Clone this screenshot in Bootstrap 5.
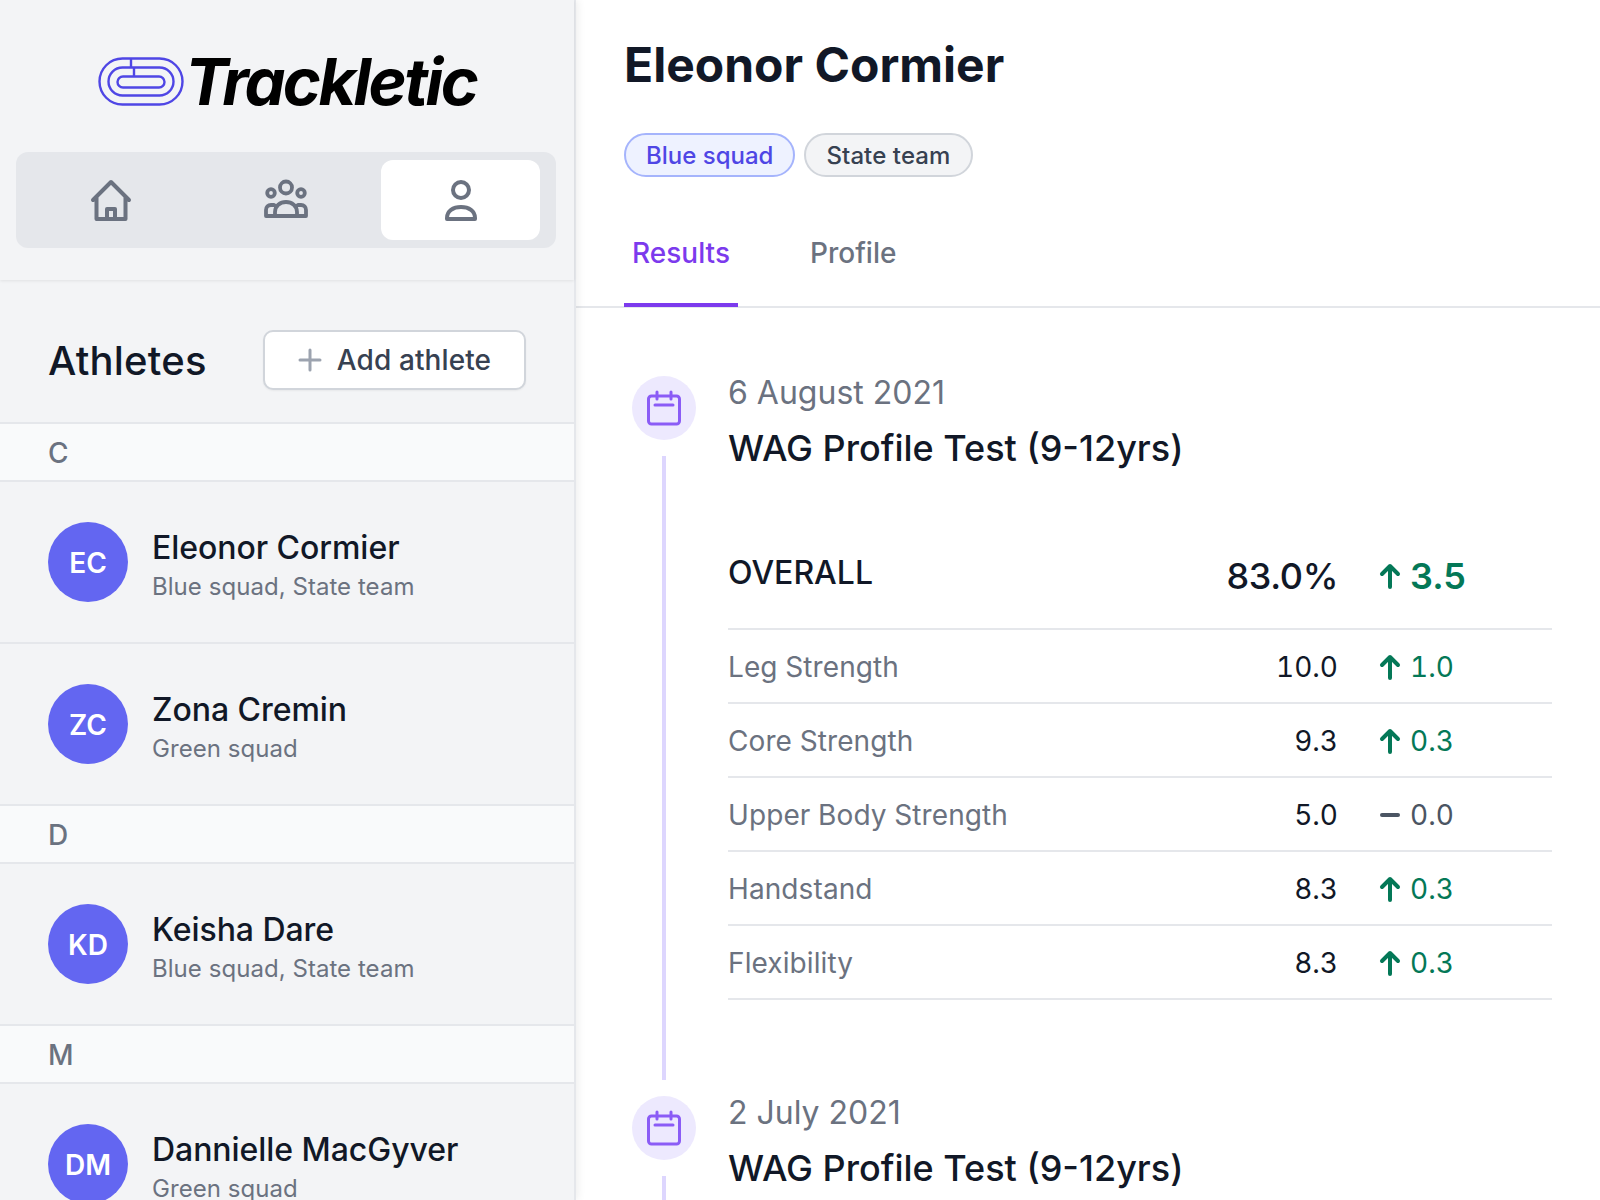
<!DOCTYPE html>
<html lang="en">
<head>
  <meta charset="UTF-8" />
  <title>Trackletic</title>
  <link href="https://cdn.jsdelivr.net/npm/bootstrap@5.3.2/dist/css/bootstrap.min.css" rel="stylesheet" />
  <style>
    html, body { height: 100%; }
    body { font-family: Inter, "Liberation Sans", sans-serif; color: #111827; overflow: hidden; background: #fff; }
    .app-shell { height: 1200px; }
    .side-panel { width: 576px; flex: none; background: #f3f4f6; border-right: 2px solid #e5e7eb; box-shadow: 2px 0 8px rgba(0,0,0,.07); z-index: 2; }
    .side-top { height: 280px; padding: 54px 18px 0 16px; box-shadow: 0 1px 3px rgba(0,0,0,.08); }
    .brand-row { height: 98px; padding-left: 82px; }
    .brand-mark { margin: 3px 1px 0 0; flex: none; }
    .brand-name { font-size: 65px; font-weight: 700; font-style: italic; letter-spacing: -2.6px; line-height: 1; color: #000; margin-top: -5px; }
    .switcher { height: 96px; background: #e5e7eb; border-radius: 12px; padding: 8px 8px 8px 7px; }
    .switch-cell { width: 175px; flex: none; display: flex; align-items: center; justify-content: center; border-radius: 12px; color: #6b7280; }
    .switch-cell.is-on { width: 159px; background: #fff; margin: 0 8px; }
    .athletes-head { height: 142px; padding: 18px 48px 0 48px; }
    .athletes-title { font-size: 40px; font-weight: 500; letter-spacing: .2px; margin: 0; padding-top: 2px; }
    .add-btn { width: 263px; height: 60px; font-size: 28px; font-weight: 500; letter-spacing: .1px; color: #374151; background: #fff; border: 2px solid #d1d5db; border-radius: 10px; box-shadow: 0 1px 2px rgba(0,0,0,.05); gap: 15px; }
    .letter-row { height: 60px; padding: 2px 0 0 48px; background: #f9fafb; border-top: 2px solid #e5e7eb; border-bottom: 2px solid #e5e7eb; color: #6b7280; font-size: 28px; font-weight: 500; display: flex; align-items: center; }
    .person-row { height: 160px; padding-left: 48px; gap: 24px; display: flex; align-items: center; }
    .person-row + .person-row { height: 162px; border-top: 2px solid #e5e7eb; }
    .avatar-dot { width: 80px; height: 80px; border-radius: 50%; background: #6366f1; color: #fff; font-size: 28px; font-weight: 600; flex: none; display: flex; align-items: center; justify-content: center; padding-top: 1px; }
    .person-text { padding-top: 8px; }
    .person-name { font-size: 32px; font-weight: 500; line-height: 40px; letter-spacing: -.05px; }
    .person-sub { font-size: 24px; color: #6b7280; line-height: 36px; margin-top: 1px; letter-spacing: .05px; }
    .main-panel { flex: 1 1 0; min-width: 0; }
    .main-head { padding: 32px 0 0 48px; border-bottom: 2px solid #e5e7eb; height: 308px; }
    .athlete-title { font-size: 48px; font-weight: 700; line-height: 66px; margin: 0 0 35px; }
    .tag-pill { height: 44px; padding: 2px 20px 0; border-radius: 22px; font-size: 24px; font-weight: 500; display: inline-flex; align-items: center; border: 2px solid #d1d5db; background: #f3f4f6; color: #374151; }
    .tag-pill.is-blue { background: #eef2ff; border-color: #a5b4fc; color: #4f46e5; margin-right: 9px; }
    .tag-pill.is-plain { padding-right: 21px; letter-spacing: .1px; }
    .tab-row { margin-top: 55px; }
    .tab-link { font-size: 28px; font-weight: 500; color: #6b7280; padding: 0 8px 29px; margin-right: 64px; line-height: 42px; }
    .tab-link.is-on { color: #7c3aed; border-bottom: 4px solid #7c3aed; }
    .results-wrap { padding: 68px 48px 0 48px; }
    .timeline-item { gap: 24px; }
    .rail { width: 80px; flex: none; padding-left: 8px; gap: 16px; }
    .rail-dot { width: 64px; height: 64px; border-radius: 50%; background: #ede9fe; color: #8b5cf6; display: flex; align-items: center; justify-content: center; flex: none; }
    .rail-line { width: 4px; background: #ddd6fe; margin-left: 30px; height: 624px; }
    .rail-line.is-short { height: 60px; }
    .test-date { font-size: 32px; color: #6b7280; line-height: 36px; margin-top: -1px; }
    .test-name { font-size: 36px; font-weight: 500; line-height: 44px; margin: 15px 0 0; }
    .score-list { margin-top: 59px; width: 824px; }
    .score-row { height: 74px; border-bottom: 2px solid #e5e7eb; font-size: 28px; display: flex; align-items: center; color: #6b7280; padding-top: 2px; font-variant-numeric: tabular-nums; }
    .score-row.is-total { height: 101px; color: #111827; padding-top: 0; font-variant-numeric: normal; }
    .score-label { flex: 1 1 0; letter-spacing: .1px; }
    .is-total .score-label { font-size: 32px; font-weight: 500; margin-top: -12px; letter-spacing: 0; }
    .score-value { color: #111827; width: 141px; text-align: right; }
    .is-total .score-value { font-size: 36px; font-weight: 500; letter-spacing: -.4px; }
    .score-delta { width: 214px; padding-left: 41px; display: flex; align-items: center; gap: 9px; color: #047857; }
    .is-total .score-delta { font-size: 36px; font-weight: 600; }
    .is-total .score-value, .is-total .score-delta { margin-top: -6px; }
    .score-delta.is-flat { color: #4b5563; }
    .next-item { margin-top: 16px; }
  </style>
</head>
<body>
  <div class="app-shell d-flex">
    <aside class="side-panel">
      <div class="side-top">
        <div class="brand-row d-flex align-items-start">
          <svg class="brand-mark" width="86" height="50" viewBox="97 56 86 50" fill="none" stroke="#4f46e5" stroke-width="2.4">
            <rect x="98.500" y="57.500" width="83" height="46" rx="23"/>
            <rect x="107.500" y="66.500" width="65" height="28" rx="14"/>
            <rect x="116.500" y="75.500" width="47" height="11" rx="5.500"/>
            <path d="M130 57.500v9M133 66.500v9"/>
          </svg>
          <span class="brand-name">Trackletic</span>
        </div>
        <div class="switcher d-flex">
          <div class="switch-cell">
            <svg width="48" height="48" viewBox="0 0 48 48" fill="none" stroke="currentColor" stroke-width="4" stroke-linecap="round" stroke-linejoin="round"><path d="M6 24 24 6l18 18M9.500 21v22h29V21M20 43V33h8v10"/></svg>
          </div>
          <div class="switch-cell">
            <svg width="48" height="48" viewBox="0 0 48 48" fill="none" stroke="currentColor" stroke-width="3.800" stroke-linecap="round" stroke-linejoin="round"><circle cx="24" cy="11.500" r="6"/><circle cx="9" cy="17" r="3.800"/><circle cx="39" cy="17" r="3.800"/><path d="M4 40v-6c0-3 2-5 5-5h3M44 40v-6c0-3-2-5-5-5h-3M13 40v-4c0-6 5-10 11-10s11 4 11 10v4M4 40h40"/></svg>
          </div>
          <div class="switch-cell is-on">
            <svg width="48" height="48" viewBox="0 0 48 48" fill="none" stroke="currentColor" stroke-width="4" stroke-linecap="round" stroke-linejoin="round"><circle cx="24" cy="14" r="8"/><path d="M10 43v-1c0-7 6-11 14-11s14 4 14 11v1z"/></svg>
          </div>
        </div>
      </div>

      <div class="athletes-head d-flex justify-content-between align-items-center">
        <h2 class="athletes-title">Athletes</h2>
        <button type="button" class="btn add-btn d-flex align-items-center justify-content-center p-0">
          <svg width="24" height="24" viewBox="0 0 24 24" fill="none" stroke="#9ca3af" stroke-width="3" stroke-linecap="round"><path d="M12 2v20M2 12h20"/></svg>
          Add athlete
        </button>
      </div>

      <div class="letter-row">C</div>
      <div class="person-row">
        <div class="avatar-dot">EC</div>
        <div class="person-text"><div class="person-name">Eleonor Cormier</div><div class="person-sub">Blue squad, State team</div></div>
      </div>
      <div class="person-row">
        <div class="avatar-dot">ZC</div>
        <div class="person-text"><div class="person-name">Zona Cremin</div><div class="person-sub">Green squad</div></div>
      </div>
      <div class="letter-row">D</div>
      <div class="person-row">
        <div class="avatar-dot">KD</div>
        <div class="person-text"><div class="person-name">Keisha Dare</div><div class="person-sub">Blue squad, State team</div></div>
      </div>
      <div class="letter-row">M</div>
      <div class="person-row">
        <div class="avatar-dot">DM</div>
        <div class="person-text"><div class="person-name">Dannielle MacGyver</div><div class="person-sub">Green squad</div></div>
      </div>
    </aside>

    <main class="main-panel">
      <div class="main-head">
        <h1 class="athlete-title">Eleonor Cormier</h1>
        <div class="d-flex">
          <span class="tag-pill is-blue">Blue squad</span>
          <span class="tag-pill is-plain">State team</span>
        </div>
        <div class="tab-row d-flex">
          <div class="tab-link is-on">Results</div>
          <div class="tab-link">Profile</div>
        </div>
      </div>

      <div class="results-wrap">
        <div class="timeline-item d-flex">
          <div class="rail d-flex flex-column">
            <div class="rail-dot">
              <svg width="40" height="40" viewBox="0 0 40 40" fill="none" stroke="currentColor" stroke-width="3" stroke-linecap="round" stroke-linejoin="round"><rect x="4.500" y="8" width="31" height="28" rx="3"/><path d="M13 4v7M27 4v7M11 17h18"/></svg>
            </div>
            <div class="rail-line"></div>
          </div>
          <div>
            <div class="test-date">6 August 2021</div>
            <div class="test-name">WAG Profile Test (9-12yrs)</div>
            <div class="score-list">
              <div class="score-row is-total">
                <div class="score-label">OVERALL</div>
                <div class="score-value">83.0%</div>
                <div class="score-delta"><svg width="22" height="26" viewBox="0 0 22 26" fill="none" stroke="currentColor" stroke-width="4" stroke-linecap="round" stroke-linejoin="round"><path d="M11 24V3M3 11l8-8 8 8"/></svg>3.5</div>
              </div>
              <div class="score-row">
                <div class="score-label">Leg Strength</div>
                <div class="score-value">10.0</div>
                <div class="score-delta"><svg width="22" height="26" viewBox="0 0 22 26" fill="none" stroke="currentColor" stroke-width="4" stroke-linecap="round" stroke-linejoin="round"><path d="M11 24V3M3 11l8-8 8 8"/></svg>1.0</div>
              </div>
              <div class="score-row">
                <div class="score-label">Core Strength</div>
                <div class="score-value">9.3</div>
                <div class="score-delta"><svg width="22" height="26" viewBox="0 0 22 26" fill="none" stroke="currentColor" stroke-width="4" stroke-linecap="round" stroke-linejoin="round"><path d="M11 24V3M3 11l8-8 8 8"/></svg>0.3</div>
              </div>
              <div class="score-row">
                <div class="score-label">Upper Body Strength</div>
                <div class="score-value">5.0</div>
                <div class="score-delta is-flat"><svg width="22" height="26" viewBox="0 0 22 26" fill="none" stroke="currentColor" stroke-width="4" stroke-linecap="round"><path d="M3 13h16"/></svg>0.0</div>
              </div>
              <div class="score-row">
                <div class="score-label">Handstand</div>
                <div class="score-value">8.3</div>
                <div class="score-delta"><svg width="22" height="26" viewBox="0 0 22 26" fill="none" stroke="currentColor" stroke-width="4" stroke-linecap="round" stroke-linejoin="round"><path d="M11 24V3M3 11l8-8 8 8"/></svg>0.3</div>
              </div>
              <div class="score-row">
                <div class="score-label">Flexibility</div>
                <div class="score-value">8.3</div>
                <div class="score-delta"><svg width="22" height="26" viewBox="0 0 22 26" fill="none" stroke="currentColor" stroke-width="4" stroke-linecap="round" stroke-linejoin="round"><path d="M11 24V3M3 11l8-8 8 8"/></svg>0.3</div>
              </div>
            </div>
          </div>
        </div>
        <div class="timeline-item next-item d-flex">
          <div class="rail d-flex flex-column">
            <div class="rail-dot">
              <svg width="40" height="40" viewBox="0 0 40 40" fill="none" stroke="currentColor" stroke-width="3" stroke-linecap="round" stroke-linejoin="round"><rect x="4.500" y="8" width="31" height="28" rx="3"/><path d="M13 4v7M27 4v7M11 17h18"/></svg>
            </div>
            <div class="rail-line is-short"></div>
          </div>
          <div>
            <div class="test-date">2 July 2021</div>
            <div class="test-name">WAG Profile Test (9-12yrs)</div>
          </div>
        </div>
      </div>
    </main>
  </div>
  <script src="https://cdn.jsdelivr.net/npm/bootstrap@5.3.2/dist/js/bootstrap.bundle.min.js"></script>
</body>
</html>
